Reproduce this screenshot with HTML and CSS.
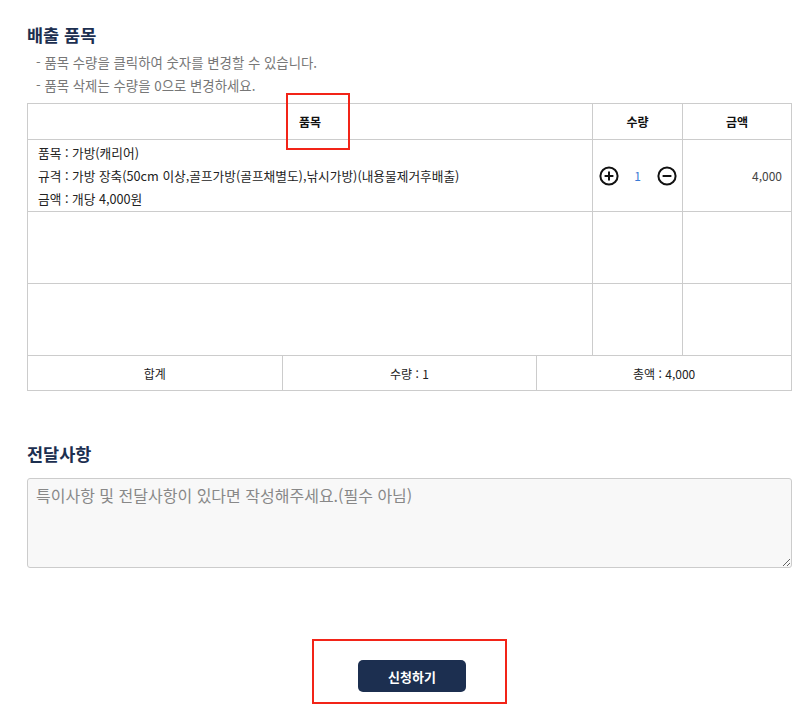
FILE: index.html
```html
<!DOCTYPE html>
<html lang="ko">
<head>
  <meta charset="UTF-8">
  <title>배출 품목</title>
  <link rel="stylesheet" href="styles.css">
</head>
<body>

  <div class="wrap">
    <h3 class="title">배출 품목</h3>
    <ul class="notes">
      <li>- 품목 수량을 클릭하여 숫자를 변경할 수 있습니다.</li>
      <li>- 품목 삭제는 수량을 0으로 변경하세요.</li>
    </ul>

    <table class="items">
      <colgroup>
        <col>
        <col class="col-qty">
        <col class="col-price">
      </colgroup>
      <thead>
        <tr>
          <th>품목</th>
          <th>수량</th>
          <th>금액</th>
        </tr>
      </thead>
      <tbody>
        <tr>
          <td class="info">
            <p>품목 : 가방(캐리어)</p>
            <p>규격 : 가방 장축(50cm 이상,골프가방(골프채별도),낚시가방)(내용물제거후배출)</p>
            <p>금액 : 개당 4,000원</p>
          </td>
          <td class="qty">
            <div class="qty-box">
              <button class="qty-btn" type="button">
                <svg width="20" height="20" viewBox="0 0 20 20"><circle cx="10" cy="10" r="8.6" fill="none" stroke="#111" stroke-width="2"/><path d="M5.6 10h8.8M10 5.6v8.8" stroke="#111" stroke-width="2"/></svg>
              </button>
              <span class="qty-num">1</span>
              <button class="qty-btn" type="button">
                <svg width="20" height="20" viewBox="0 0 20 20"><circle cx="10" cy="10" r="8.6" fill="none" stroke="#111" stroke-width="2"/><path d="M5.6 10h8.8" stroke="#111" stroke-width="2"/></svg>
              </button>
            </div>
          </td>
          <td class="price">4,000</td>
        </tr>
        <tr class="empty"><td></td><td></td><td></td></tr>
        <tr class="empty"><td></td><td></td><td></td></tr>
      </tbody>
    </table>

    <table class="total">
      <tr>
        <td>합계</td>
        <td>수량 : 1</td>
        <td>총액 : 4,000</td>
      </tr>
    </table>

    <h3 class="title memo-title">전달사항</h3>
    <textarea class="memo" placeholder="특이사항 및 전달사항이 있다면 작성해주세요.(필수 아님)"></textarea>

    <div class="actions">
      <button class="submit" type="button">신청하기</button>
    </div>

    <div class="mark mark-head"></div>
    <div class="mark mark-btn"></div>
  </div>

</body>
</html>
```

FILE: styles.css
```css
body {
  margin: 0;
  background-color: #fff;
  font-family: "Noto Sans CJK KR", "Noto Sans", sans-serif;
  color: #333;
}

.wrap {
  position: relative;
  padding: 22px 20px 40px 27px;
}

.title {
  margin: 0;
  font-size: 17.5px;
  font-weight: bold;
  color: #1c2f50;
  line-height: 26px;
}

.notes {
  list-style: none;
  margin: 3px 0 6px;
  padding: 0 0 0 9px;
  font-size: 13.4px;
  color: #777;
}

.notes li {
  line-height: 23px;
}

.items, .total {
  width: 765px;
  border-collapse: collapse;
  table-layout: fixed;
  font-size: 12px;
  color: #222;
}

.items th, .items td, .total td {
  border: 1px solid #ccc;
  padding: 0;
}

.col-qty {
  width: 90px;
}

.col-price {
  width: 109px;
}

.items th {
  height: 35px;
  font-size: 12px;
  font-weight: bold;
  color: #111;
}

.items td {
  height: 71px;
}

.info {
  padding: 0 10px !important;
  font-size: 12.7px;
}

.info p {
  margin: 0;
  line-height: 23px;
}

.qty-box {
  display: flex;
  align-items: center;
  justify-content: center;
  gap: 10px;
}

.qty-btn {
  border: none;
  background: none;
  padding: 0;
  width: 20px;
  height: 20px;
  cursor: pointer;
}

.qty-num {
  width: 18px;
  text-align: center;
  color: #3a7bd5;
}

.price {
  text-align: right;
  padding-right: 9px !important;
  color: #444;
}

.total {
  margin-top: -1px;
}

.total td {
  height: 34px;
  text-align: center;
}

.memo-title {
  margin-top: 50px;
}

.memo {
  display: block;
  box-sizing: border-box;
  width: 765px;
  height: 90px;
  margin-top: 11px;
  padding: 4px 8px;
  border: 1px solid #ccc;
  border-radius: 3px;
  background-color: #f8f8f8;
  font-family: "Noto Sans CJK KR", sans-serif;
  font-size: 16px;
  resize: vertical;
}

.memo::placeholder {
  color: #888;
}

.actions {
  display: flex;
  justify-content: center;
  margin-top: 92px;
  padding-left: 6px;
}

.submit {
  width: 108px;
  height: 32px;
  border: none;
  border-radius: 5px;
  background-color: #1c2f50;
  color: #fff;
  font-family: "Noto Sans CJK KR", sans-serif;
  font-size: 13px;
  font-weight: bold;
  cursor: pointer;
}

.mark {
  position: absolute;
  border: 2px solid #f22418;
  box-sizing: border-box;
}

.mark-head {
  left: 286px;
  top: 93px;
  width: 64px;
  height: 57px;
}

.mark-btn {
  left: 312px;
  top: 639px;
  width: 195px;
  height: 65px;
}
```
